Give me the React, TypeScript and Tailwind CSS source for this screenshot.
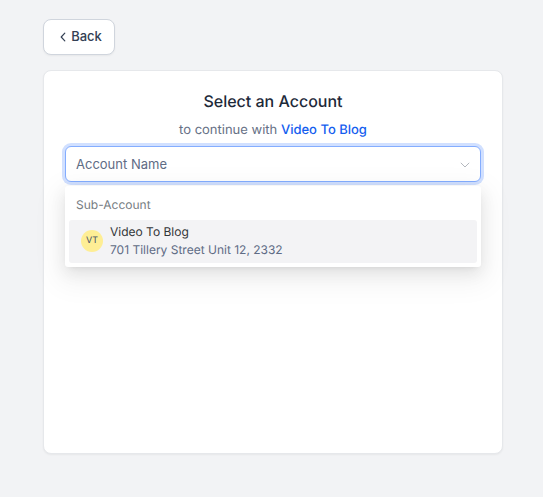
import React from "react";

const accounts = [
  { initials: "VT", name: "Video To Blog", address: "701 Tillery Street Unit 12, 2332" },
];

export default function SelectAccount() {
  return (
    <main className="min-h-screen bg-[#f2f3f5] pt-[19px] pr-10 pb-10 pl-[43px] font-['Inter',sans-serif] [text-rendering:geometricPrecision]">
      <button
        type="button"
        className="flex h-9 w-[72px] items-center justify-center gap-[5px] rounded-lg border border-[#d0d5dd] bg-white pl-1 text-[13px] font-medium text-[#344054] shadow-xs"
      >
        <svg className="h-2.5 w-1.5" viewBox="0 0 6 10" fill="none" stroke="currentColor" strokeWidth="1.2" strokeLinecap="round" strokeLinejoin="round" aria-hidden="true">
          <path d="M4.8 1.2 1.2 5 4.8 8.8" />
        </svg>
        Back
      </button>

      <section className="mt-[15px] min-h-96 rounded-lg border border-[#e6e8eb] bg-white px-[21px] pt-[18px] shadow-xs">
        <h1 className="text-center text-base leading-6 font-medium text-[#1d2939]">
          Select an Account
        </h1>
        <p className="mt-[5px] text-center text-[13px] leading-6 text-[#667085]">
          to continue with{" "}
          <a href="#" className="font-medium text-[#155eef]">
            Video To Blog
          </a>
        </p>

        {/* Account picker */}
        <div className="relative mt-1">
          <input
            type="text"
            role="combobox"
            aria-label="Account Name"
            aria-expanded="true"
            aria-controls="account-list"
            placeholder="Account Name"
            className="block h-9 w-full rounded-md border border-[#84adff] bg-white pr-8 pl-2.5 text-[13px] text-[#344054] ring-3 ring-[#d1e0ff] outline-none placeholder:text-[#606c85]"
          />
          <svg className="pointer-events-none absolute top-4 right-[11px] h-1.5 w-2.5 text-[#b4b8be]" viewBox="0 0 10 6" fill="none" stroke="currentColor" aria-hidden="true">
            <path d="M0.8 0.8 5 5 9.2 0.8" />
          </svg>

          {/* Options menu */}
          <div
            id="account-list"
            role="listbox"
            aria-label="Accounts"
            className="absolute inset-x-0 top-full mt-1 rounded-[3px] bg-white p-1 shadow-[0_3px_6px_-4px_rgba(0,0,0,0.12),0_6px_16px_rgba(0,0,0,0.08),0_9px_28px_8px_rgba(0,0,0,0.05)]"
          >
            <div className="flex h-[30px] items-center pl-[7px] text-xs text-[#767c82]">
              Sub-Account
            </div>
            {accounts.map((account) => (
              <div
                key={account.name}
                role="option"
                aria-selected="true"
                className="flex items-center gap-[7px] rounded-[3px] bg-[#f3f3f5] pt-[3px] pb-1 pl-3"
              >
                <div className="flex size-[22px] items-center justify-center rounded-full bg-[#feee95] text-[9px] text-[#475467]">
                  {account.initials}
                </div>
                <div className="text-xs leading-[18px]">
                  <div className="text-[#333639]">{account.name}</div>
                  <div className="text-[#606c85]">{account.address}</div>
                </div>
              </div>
            ))}
          </div>
        </div>
      </section>
    </main>
  );
}
